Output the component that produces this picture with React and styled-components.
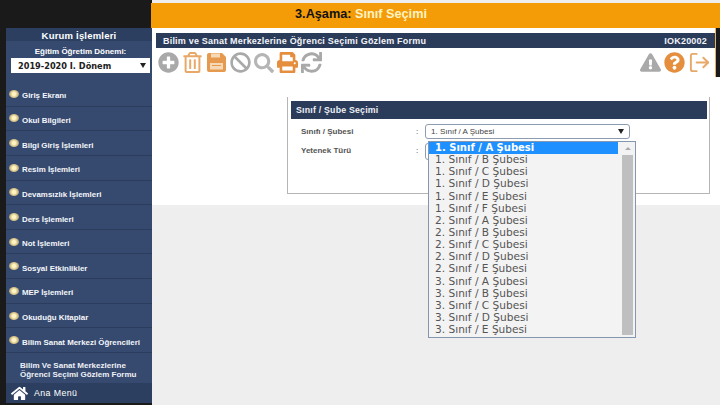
import React from "react";
import styled, { createGlobalStyle } from "styled-components";
import {
  FaPlusCircle,
  FaRegTrashAlt,
  FaBan,
  FaSearch,
  FaPrint,
  FaSync,
  FaExclamationTriangle,
  FaQuestionCircle,
  FaHome,
} from "react-icons/fa";
import { FiLogOut } from "react-icons/fi";

const menuItems = [
  "Giriş Ekranı",
  "Okul Bilgileri",
  "Bilgi Giriş İşlemleri",
  "Resim İşlemleri",
  "Devamsızlık İşlemleri",
  "Ders İşlemleri",
  "Not İşlemleri",
  "Sosyal Etkinlikler",
  "MEP İşlemleri",
  "Okuduğu Kitaplar",
  "Bilim Sanat Merkezi Öğrencileri",
];

const options = [
  "1. Sınıf / A Şubesi",
  "1. Sınıf / B Şubesi",
  "1. Sınıf / C Şubesi",
  "1. Sınıf / D Şubesi",
  "1. Sınıf / E Şubesi",
  "1. Sınıf / F Şubesi",
  "2. Sınıf / A Şubesi",
  "2. Sınıf / B Şubesi",
  "2. Sınıf / C Şubesi",
  "2. Sınıf / D Şubesi",
  "2. Sınıf / E Şubesi",
  "3. Sınıf / A Şubesi",
  "3. Sınıf / B Şubesi",
  "3. Sınıf / C Şubesi",
  "3. Sınıf / D Şubesi",
  "3. Sınıf / E Şubesi",
];

// floppy icon: solid body with a pale label, the package one has a round cut-out
function SaveIcon() {
  return (
    <svg width="21" height="21" viewBox="0 0 21 21">
      <path
        d="M3 1h13l4 4v13a2 2 0 0 1-2 2H3a2 2 0 0 1-2-2V3a2 2 0 0 1 2-2z"
        fill="#e59a4f"
      />
      <rect x="5" y="1.5" width="9" height="4" fill="#f6d9b4" />
      <rect x="4" y="11" width="13" height="6.5" fill="#f6d9b4" />
      <rect x="6" y="13" width="9" height="1" fill="#e59a4f" />
    </svg>
  );
}

export default function App() {
  return (
    <>
      <GlobalStyle />
      <Page>
        <Sidebar>
          <SideTitle>Kurum İşlemleri</SideTitle>
          <TermBlock>
            <TermLabel>Eğitim Öğretim Dönemi:</TermLabel>
            <TermSelect>
              2019-2020 I. Dönem
              <Arrow />
            </TermSelect>
          </TermBlock>
          <Menu>
            {menuItems.map((item) => (
              <MenuRow key={item}>
                <Bullet />
                {item}
              </MenuRow>
            ))}
          </Menu>
          <FormName>
            Bilim Ve Sanat Merkezlerine
            <br />
            Öğrenci Seçimi Gözlem Formu
          </FormName>
          <HomeRow>
            <FaHome size={17} color="#fff" />
            Ana Menü
          </HomeRow>
        </Sidebar>
        <Main>
          <StageBar>
            3.Aşama: <em>Sınıf Seçimi</em>
          </StageBar>
          <TopArea>
            <FormBar>
              <span>Bilim ve Sanat Merkezlerine Öğrenci Seçimi Gözlem Formu</span>
              <span>IOK20002</span>
            </FormBar>
            <Toolbar>
              <IconGroup>
                <FaPlusCircle size={21} color="#a9a9a9" />
                <FaRegTrashAlt size={21} color="#e8a867" />
                <SaveIcon />
                <FaBan size={21} color="#a9a9a9" />
                <FaSearch size={20} color="#b5b5b5" />
                <FaPrint size={21} color="#e58f3e" />
                <FaSync size={21} color="#a9a9a9" />
              </IconGroup>
              <IconGroup>
                <FaExclamationTriangle size={21} color="#a9a9a9" />
                <FaQuestionCircle size={21} color="#e58f3e" />
                <FiLogOut size={23} color="#e8a867" />
              </IconGroup>
            </Toolbar>
          </TopArea>
          <Content>
            <Panel>
              <PanelHead>Sınıf / Şube Seçimi</PanelHead>
              <FieldRow>
                <FieldLabel>Sınıfı / Şubesi</FieldLabel>
                <Colon>:</Colon>
                <ClassSelect>
                  1. Sınıf / A Şubesi
                  <Arrow />
                </ClassSelect>
              </FieldRow>
              <FieldRow>
                <FieldLabel>Yetenek Türü</FieldLabel>
                <Colon>:</Colon>
                <HiddenSelect />
              </FieldRow>
              <Dropdown>
                <OptionList>
                  {options.map((option, i) => (
                    <Option key={option} $active={i === 0}>
                      {option}
                    </Option>
                  ))}
                </OptionList>
                <ScrollTrack>
                  <ScrollUp />
                  <ScrollThumb />
                </ScrollTrack>
              </Dropdown>
            </Panel>
          </Content>
        </Main>
      </Page>
    </>
  );
}

const GlobalStyle = createGlobalStyle`
  html, body {
    margin: 0;
    padding: 0;
    background: #1a1a1a;
  }
  body {
    font-family: "Liberation Sans", Arial, sans-serif;
    overflow: hidden;
  }
`;

const Page = styled.div`
  width: 720px;
  height: 405px;
  display: grid;
  grid-template-columns: 152px 568px;
  overflow: hidden;
`;

const Sidebar = styled.aside`
  margin: 28px 0 2px 6px;
  display: flex;
  flex-direction: column;
  background: #364a70;
  color: #fff;
  font-weight: bold;
`;

const SideTitle = styled.div`
  height: 13px;
  line-height: 16px;
  background: #2d3f60;
  text-align: center;
  font-size: 9.5px;
  letter-spacing: 0.2px;
`;

const TermBlock = styled.div`
  height: 41px;
  padding: 6px 2px 0 5px;
  box-sizing: border-box;
  text-align: center;
`;

const TermLabel = styled.div`
  font-size: 8px;
  line-height: 10px;
  margin-bottom: 1px;
`;

const TermSelect = styled.div`
  height: 15px;
  display: flex;
  align-items: center;
  justify-content: space-between;
  padding: 0 4px 0 7px;
  background: #fff;
  color: #222;
  font-family: "DejaVu Sans", sans-serif;
  font-size: 8.2px;
`;

const Arrow = styled.i`
  width: 0;
  height: 0;
  border-left: 3px solid transparent;
  border-right: 3px solid transparent;
  border-top: 5px solid #222;
`;

const Menu = styled.div`
  display: flex;
  flex-direction: column;
`;

const MenuRow = styled.div`
  height: 24.65px;
  box-sizing: border-box;
  display: flex;
  align-items: center;
  gap: 3px;
  padding: 4px 0 0 3px;
  border-bottom: 1px solid #2b3c5c;
  font-size: 7.9px;
  color: #f4f6fa;
  white-space: nowrap;
`;

const Bullet = styled.span`
  width: 10px;
  height: 8px;
  margin-top: -4px;
  border-radius: 50%;
  background: radial-gradient(circle, #fff3c0 0 25%, #cdb983 60%, #8f8a78 100%);
  flex: none;
`;

const FormName = styled.div`
  padding: 8px 0 0 14px;
  height: 30px;
  box-sizing: border-box;
  font-size: 8px;
  line-height: 9px;
  color: #eef1f6;
  white-space: nowrap;
`;

const HomeRow = styled.div`
  flex: 1;
  display: flex;
  align-items: center;
  gap: 6px;
  padding-left: 5px;
  background: #2d3f60;
  font-size: 8.8px;
  font-weight: normal;
  letter-spacing: 0.4px;
`;

const Main = styled.main`
  display: flex;
  flex-direction: column;
  background: #eeeeee;
`;

const StageBar = styled.div`
  margin: 3px 0 0 -1px;
  height: 25px;
  background: #f39c07;
  text-align: center;
  padding-right: 149px;
  box-sizing: border-box;
  line-height: 22px;
  font-size: 12.7px;
  font-weight: bold;
  color: #111;

  em {
    font-style: normal;
    color: #fff3c4;
  }
`;

const TopArea = styled.div`
  background: #fff;
  height: 49px;
  margin-right: 4px;
  padding: 1px 0 0 1px;
  box-sizing: border-box;
  box-shadow: 4px 0 0 #1a1a1a;
  border-right: 1px solid #e8b060;
`;

const FormBar = styled.div`
  margin: 4px 0 0 3px;
  height: 15px;
  display: flex;
  align-items: center;
  justify-content: space-between;
  padding: 0 8px 0 7px;
  background: #2b3b5a;
  color: #f2f4f8;
  font-size: 9px;
  font-weight: bold;
  letter-spacing: 0.2px;
`;

const Toolbar = styled.div`
  display: flex;
  justify-content: space-between;
  align-items: center;
  padding: 3px 4px 0 5px;
`;

const IconGroup = styled.div`
  display: flex;
  align-items: center;
  gap: 3px;
`;

const Content = styled.div`
  background: #fff;
  height: 128px;
  padding: 20px 10px 0 135px;
  box-sizing: border-box;
`;

const Panel = styled.section`
  position: relative;
  height: 97px;
  box-sizing: border-box;
  border: 1px solid #b5b5b5;
  border-top: none;
  padding: 4px 2px 0 3px;
`;

const PanelHead = styled.h3`
  margin: 0 0 5px;
  height: 18px;
  line-height: 18px;
  padding-left: 5px;
  background: #2b3b5a;
  color: #eef1f6;
  font-size: 8.8px;
  letter-spacing: 0.2px;
  font-weight: bold;
`;

const FieldRow = styled.div`
  display: flex;
  align-items: flex-start;
  height: 15px;
  margin-bottom: 4px;
`;

const FieldLabel = styled.label`
  width: 125px;
  padding-left: 10px;
  box-sizing: border-box;
  font-size: 8px;
  line-height: 15px;
  font-weight: bold;
  color: #555;
`;

const Colon = styled.span`
  width: 9px;
  font-size: 8px;
  line-height: 15px;
  color: #333;
`;

const ClassSelect = styled.div`
  width: 205px;
  height: 15px;
  box-sizing: border-box;
  display: flex;
  align-items: center;
  justify-content: space-between;
  padding: 0 5px;
  border: 1px solid #8f9bb0;
  border-radius: 3px;
  background: #fff;
  font-size: 8px;
  color: #444;
`;

const HiddenSelect = styled(ClassSelect)`
  height: 17px;
`;

const Dropdown = styled.div`
  position: absolute;
  left: 140px;
  top: 44px;
  width: 208px;
  height: 197px;
  box-sizing: border-box;
  display: flex;
  border: 1px solid #8496b0;
  background: #f3f3f3;
`;

const OptionList = styled.div`
  flex: 1;
  margin-right: 2px;
  display: flex;
  flex-direction: column;
`;

const Option = styled.div`
  height: 12.15px;
  line-height: 11px;
  padding-left: 6px;
  font-family: "DejaVu Sans", sans-serif;
  font-size: ${(p) => (p.$active ? "10px" : "10.6px")};
  white-space: nowrap;
  color: ${(p) => (p.$active ? "#fff" : "#555")};
  background: ${(p) => (p.$active ? "#1e90ff" : "transparent")};
  font-weight: ${(p) => (p.$active ? "bold" : "normal")};
`;

const ScrollTrack = styled.div`
  width: 15px;
  display: flex;
  flex-direction: column;
  align-items: center;
  padding-top: 5px;
`;

const ScrollUp = styled.i`
  width: 0;
  height: 0;
  margin-bottom: 5px;
  border-left: 3px solid transparent;
  border-right: 3px solid transparent;
  border-bottom: 3px solid #aaa;
`;

const ScrollThumb = styled.div`
  width: 11px;
  height: 180px;
  background: #bfbfbf;
`;
